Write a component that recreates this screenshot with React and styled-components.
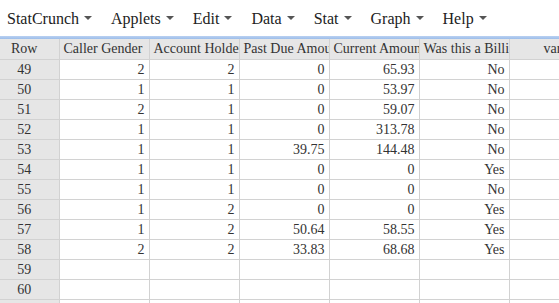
import styled, { createGlobalStyle } from "styled-components";

const serif = `"Liberation Serif", "Times New Roman", Times, "DejaVu Serif", serif`;

const GlobalStyle = createGlobalStyle`
  html, body {
    margin: 0;
    padding: 0;
    background: #ffffff;
    overflow: hidden;
  }
  body, table, th, td {
    font-family: ${serif};
  }
`;

const Page = styled.div`
  width: 559px;
  height: 303px;
  overflow: hidden;
  font-family: ${serif};
  color: #333333;
`;

const MenuBar = styled.nav`
  display: flex;
  align-items: center;
  gap: 19px;
  height: 36px;
  padding-left: 7px;
  font-family: ${serif};
  font-size: 16px;
  color: #222222;
`;

const MenuItem = styled.div`
  display: flex;
  align-items: center;
  gap: 5px;
  white-space: nowrap;
  padding-top: 2px;
`;

const Caret = styled.span`
  width: 0;
  height: 0;
  border-left: 4px solid transparent;
  border-right: 4px solid transparent;
  border-top: 4px solid #555555;
  margin-top: -2px;
`;

const Divider = styled.div`
  height: 3px;
  background: linear-gradient(#b9d1f2, #9dbde9);
`;

const Grid = styled.table`
  border-collapse: collapse;
  table-layout: fixed;
  width: 599px;
  font-family: ${serif};
  font-size: 14px;
  color: #333333;
`;

const Col = styled.col`
  width: ${(p) => p.$w}px;
`;

const HeadCell = styled.th`
  height: 20px;
  padding: 0 0 0 4px;
  background: #e6e6e6;
  border: 1px solid #d2d2d2;
  border-top: none;
  font-weight: normal;
  text-align: ${(p) => p.$align || "left"};
  white-space: nowrap;
  overflow: hidden;
  line-height: 20px;
`;

const RowHead = styled(HeadCell)`
  text-align: center;
  padding: 0 10px 0 0;
  border-left: none;
`;

const RowNum = styled.td`
  height: 19px;
  padding: 0 10px 0 0;
  background: #e6e6e6;
  border: 1px solid #d2d2d2;
  border-left: none;
  text-align: center;
  line-height: 19px;
`;

const Cell = styled.td`
  height: 19px;
  padding: 0 4px 0 0;
  border: 1px solid #d2d2d2;
  text-align: right;
  white-space: nowrap;
  overflow: hidden;
  line-height: 19px;
`;

const menus = ["StatCrunch", "Applets", "Edit", "Data", "Stat", "Graph", "Help"];

const headers = [
  "Caller Gender",
  "Account Holder Gender",
  "Past Due Amount",
  "Current Amount",
  "Was this a Billing Question?",
];

const rows = [
  [49, "2", "2", "0", "65.93", "No"],
  [50, "1", "1", "0", "53.97", "No"],
  [51, "2", "1", "0", "59.07", "No"],
  [52, "1", "1", "0", "313.78", "No"],
  [53, "1", "1", "39.75", "144.48", "No"],
  [54, "1", "1", "0", "0", "Yes"],
  [55, "1", "1", "0", "0", "No"],
  [56, "1", "2", "0", "0", "Yes"],
  [57, "1", "2", "50.64", "58.55", "Yes"],
  [58, "2", "2", "33.83", "68.68", "Yes"],
  [59, "", "", "", "", ""],
  [60, "", "", "", "", ""],
  [61, "", "", "", "", ""],
];

export default function App() {
  return (
    <Page>
      <GlobalStyle />
      <MenuBar>
        {menus.map((m) => (
          <MenuItem key={m}>
            {m}
            <Caret />
          </MenuItem>
        ))}
      </MenuBar>
      <Divider />
      <Grid>
        <colgroup>
          <Col $w={59} />
          <Col $w={90} />
          <Col $w={90} />
          <Col $w={90} />
          <Col $w={90} />
          <Col $w={90} />
          <Col $w={90} />
        </colgroup>
        <thead>
          <tr>
            <RowHead>Row</RowHead>
            {headers.map((h) => (
              <HeadCell key={h}>{h}</HeadCell>
            ))}
            <HeadCell $align="center">var1</HeadCell>
          </tr>
        </thead>
        <tbody>
          {rows.map(([n, ...cells]) => (
            <tr key={n}>
              <RowNum>{n}</RowNum>
              {cells.map((c, i) => (
                <Cell key={i}>{c}</Cell>
              ))}
              <Cell />
            </tr>
          ))}
        </tbody>
      </Grid>
    </Page>
  );
}
